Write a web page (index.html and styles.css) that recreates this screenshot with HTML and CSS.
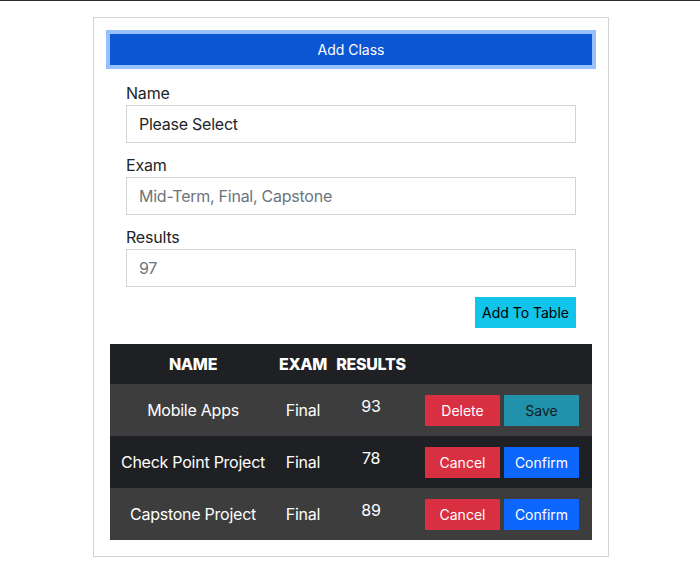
FILE: index.html
```html
<!DOCTYPE html>
<html>
<head>
<meta charset="utf-8">
<link rel="stylesheet" href="styles.css">
</head>
<body>
<div class="topline"></div>
<div class="card">
  <button class="btn btn-add-class">Add Class</button>
  <form class="form">
    <div class="group">
      <label class="label">Name</label>
      <input class="input value" type="text" value="Please Select">
    </div>
    <div class="group">
      <label class="label">Exam</label>
      <input class="input" type="text" placeholder="Mid-Term, Final, Capstone">
    </div>
    <div class="group">
      <label class="label">Results</label>
      <input class="input" type="text" placeholder="97">
    </div>
    <div class="actions">
      <button type="button" class="btn btn-info">Add To Table</button>
    </div>
  </form>
  <table class="table">
    <thead>
      <tr>
        <th class="c-name">NAME</th>
        <th class="c-exam">EXAM</th>
        <th class="c-res">RESULTS</th>
        <th class="c-act"></th>
      </tr>
    </thead>
    <tbody>
      <tr class="row-light">
        <td>Mobile Apps</td>
        <td>Final</td>
        <td><span class="num">93</span></td>
        <td class="act"><button class="btn btn-danger">Delete</button><button class="btn btn-save">Save</button></td>
      </tr>
      <tr class="row-dark">
        <td>Check Point Project</td>
        <td>Final</td>
        <td><span class="num">78</span></td>
        <td class="act"><button class="btn btn-danger">Cancel</button><button class="btn btn-primary">Confirm</button></td>
      </tr>
      <tr class="row-light">
        <td>Capstone Project</td>
        <td>Final</td>
        <td><span class="num">89</span></td>
        <td class="act"><button class="btn btn-danger">Cancel</button><button class="btn btn-primary">Confirm</button></td>
      </tr>
    </tbody>
  </table>
</div>
</body>
</html>
```

FILE: styles.css
```css
* { box-sizing: border-box; }
html, body {
  margin: 0;
  padding: 0;
  background: #fff;
  font-family: Inter, "Noto Sans", sans-serif;
  color: #212529;
}
.topline {
  height: 1px;
  background: #2b2b2b;
}
.card {
  width: 516px;
  margin: 16px 0 0 calc(50% - 257px);
  border: 1px solid #d4d4d4;
  padding: 16px;
}
.btn {
  font-family: inherit;
  font-size: 14px;
  height: 31px;
  border: 0;
  border-radius: 0;
  padding: 0 9px;
  cursor: pointer;
  line-height: 31px;
}
.btn-add-class {
  display: block;
  width: 100%;
  background: #0c55d3;
  color: #fff;
  outline: 4px solid #98c0fe;
}
.form {
  padding: 16px 16px 0;
}
.group {
  display: flex;
  flex-direction: column;
  margin-bottom: 10px;
}
.label {
  font-size: 16px;
  line-height: 24px;
  height: 24px;
  color: #212529;
  letter-spacing: -0.2px;
}
.input {
  height: 38px;
  border: 1px solid #ced4da;
  padding: 0 12px;
  font-family: inherit;
  font-size: 16px;
  letter-spacing: -0.25px;
  color: #212529;
  background: #fff;
  outline: none;
}
.input::placeholder { color: #6c757d; opacity: 1; }
.actions {
  display: flex;
  justify-content: flex-end;
}
.btn-info {
  background: #12c3ea;
  color: #000;
  width: 101px;
  padding: 0;
}
.table {
  margin-top: 16px;
  width: 482px;
  border-collapse: collapse;
  table-layout: fixed;
  color: #fff;
  font-size: 16px;
  letter-spacing: -0.25px;
}
.table th {
  height: 40px;
  font-weight: 800;
  background: #1f2024;
  text-align: center;
  padding: 0;
  letter-spacing: -0.3px;
}
.c-name { width: 166px; }
.c-exam { width: 54px; }
.c-res { width: 82px; }
.c-act { width: 180px; }
.table td {
  height: 52px;
  text-align: center;
  padding: 0;
  vertical-align: middle;
  white-space: nowrap;
}
.row-light td { background: #3d3d3d; }
.row-dark td { background: #1f2024; }
.num {
  display: inline-block;
  transform: translateY(-4px);
}
.act .btn {
  width: 75px;
  padding: 0;
  margin: 0 2px;
  vertical-align: middle;
  letter-spacing: 0;
}
.btn-danger { background: #d83040; color: #fff; }
.btn-save { background: #2192ac; color: #0e1e22; }
.btn-primary { background: #0d66fd; color: #fff; }
```
